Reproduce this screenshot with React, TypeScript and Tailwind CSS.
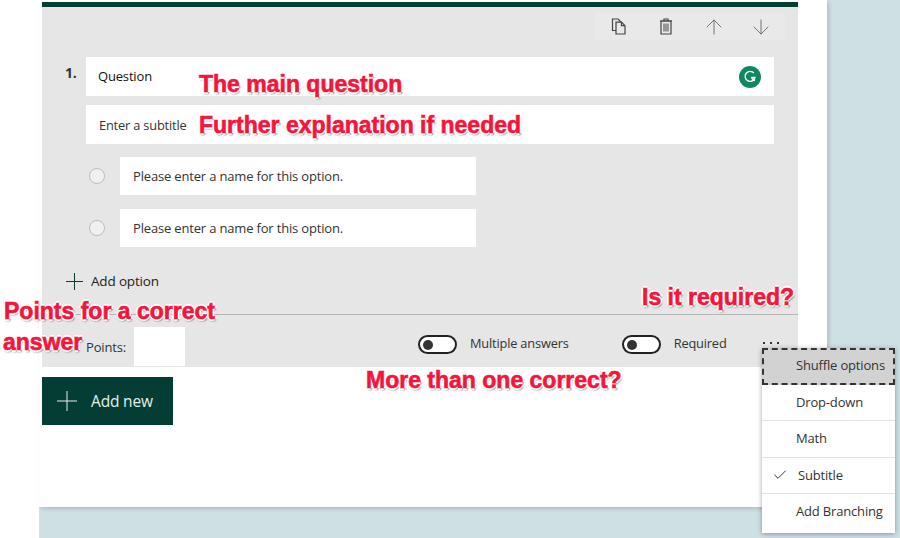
import React from 'react';
import { ArrowDown, ArrowUp, Check } from 'lucide-react';

function CopyIcon() {
  return (
    <svg width="16" height="17" viewBox="0 0 16 17" fill="none" stroke="#444" strokeWidth="1.2">
      <path d="M5 12.5H1.5V1H7L10 4" />
      <path d="M5 4.2h5.5l3.5 3.5v8.3H5z" fill="#e8e8e8" />
      <path d="M10.5 4.2v3.5H14" />
    </svg>
  );
}

function TrashIcon() {
  return (
    <svg width="14" height="17" viewBox="0 0 14 17" fill="none" stroke="#444" strokeWidth="1.2">
      <path d="M1 3h12M5 3V1h4v2" />
      <path d="M2 3v13h10V3z" />
      <path d="M5 5.5v8M7 5.5v8M9 5.5v8" strokeWidth="1" />
    </svg>
  );
}

function GrammarlyIcon() {
  return (
    <div className="flex h-[22px] w-[22px] items-center justify-center rounded-full bg-[#11875d]">
      <svg width="14" height="14" viewBox="0 0 14 14" fill="none" stroke="white" strokeWidth="1.3">
        <path d="M11 3.2A5 5 0 1 0 12 7.5H8.2" />
        <path d="M8.6 7.8l3 3.2" />
      </svg>
    </div>
  );
}

function PlusIcon({ size, color }: { size: number; color: string }) {
  return (
    <svg width={size} height={size} viewBox="0 0 20 20" stroke={color} strokeWidth={size > 18 ? 1 : 1.2}>
      <path d="M10 0v20M0 10h20" />
    </svg>
  );
}

function Toggle() {
  return (
    <div className="flex h-[19px] w-[39px] items-center rounded-full border-2 border-[#222] bg-white pl-[3px]">
      <div className="h-[10px] w-[10px] rounded-full bg-[#333]" />
    </div>
  );
}

function OptionRow() {
  return (
    <div className="flex items-center">
      <div className="ml-[47px] h-4 w-4 rounded-full border border-[#bdbdbd] bg-[#f0f0f0]" />
      <div className="ml-[15px] flex h-[38px] w-[356px] items-center bg-white pl-[13px] pt-[2px] text-[13px] text-[#333]">
        Please enter a name for this option.
      </div>
    </div>
  );
}

function Note({ className, children }: { className: string; children: React.ReactNode }) {
  return (
    <div
      className={`absolute whitespace-nowrap font-['Liberation_Sans',sans-serif] text-[23px] font-bold leading-none tracking-normal text-[#f5143c] [-webkit-text-stroke:0.6px_#f5143c] [text-shadow:2px_0_0_#fff,-2px_0_0_#fff,0_2px_0_#fff,0_-2px_0_#fff,1px_2px_2px_#666] ${className}`}
    >
      {children}
    </div>
  );
}

const menuItems = [
  { label: 'Shuffle options', focused: true },
  { label: 'Drop-down' },
  { label: 'Math' },
  { label: 'Subtitle', checked: true },
  { label: 'Add Branching', last: true },
];

export default function App() {
  return (
    <div className="relative flex h-[538px] w-[900px] overflow-hidden bg-white font-['Open_Sans',sans-serif] tracking-[-0.17px]">
      <div className="w-[39px] shrink-0" />
      <div className="flex-1 bg-[#cfe0e5]">
        <div className="h-[507px] w-[788px] bg-white pl-[3px] pt-[2px] shadow-[2px_2px_4px_rgba(0,0,0,0.15)]">
          <div className="w-[756px] border-t-[5px] border-[#033d33] bg-[#e6e6e6]">
            <div className="flex h-[50px] justify-end pr-[13px] pt-[6px]">
              <div className="flex h-[27px] w-[190px] items-center bg-[#e9e9e9]">
                <div className="flex w-[48px] justify-center pl-[1px]">
                  <CopyIcon />
                </div>
                <div className="flex w-[48px] justify-center">
                  <TrashIcon />
                </div>
                <div className="flex w-[48px] justify-center">
                  <ArrowUp size={24} strokeWidth={0.9} color="#666" />
                </div>
                <div className="flex w-[48px] justify-center">
                  <ArrowDown size={24} strokeWidth={0.9} color="#666" />
                </div>
              </div>
            </div>

            <div className="flex pl-[23px]">
              <div className="w-[21px] pt-[7px] text-[14px] font-bold leading-[18px] text-[#333]">1.</div>
              <div className="flex h-[39px] w-[688px] items-center justify-between bg-white pl-[12px] pr-[13px] text-[13px] text-[#111]">
                Question
                <GrammarlyIcon />
              </div>
            </div>
            <div className="ml-[44px] mt-[9px] flex h-[39px] w-[688px] items-center bg-white pl-[13px] pt-[2px] text-[12.8px] text-[#333]">
              Enter a subtitle
            </div>

            <div className="mt-[13px] flex flex-col gap-[14px]">
              <OptionRow />
              <OptionRow />
            </div>

            <div className="mt-[20px] flex h-[28px] items-center pl-[24px] text-[13.5px] text-[#222]">
              <PlusIcon size={17} color="#0b3b33" />
              <span className="ml-[8px]">Add option</span>
            </div>

            <div className="mt-[19px] flex h-[53px] items-start border-t border-[#b5b5b5]">
              <div className="ml-[44px] mt-[23px] text-[13px] leading-[18px] text-[#333]">Points:</div>
              <div className="ml-[8px] mt-[12px] h-[39px] w-[51px] bg-white" />
              <div className="ml-[233px] mt-[20px]">
                <Toggle />
              </div>
              <div className="ml-[13px] mt-[19px] text-[12.8px] leading-[18px] text-[#333]">Multiple answers</div>
              <div className="ml-[53px] mt-[20px]">
                <Toggle />
              </div>
              <div className="ml-[13px] mt-[19px] text-[12.8px] leading-[18px] text-[#333]">Required</div>
            </div>
          </div>

          <div className="mt-[10px] flex h-[48px] w-[131px] items-center bg-[#033d33] pl-[15px] text-[#e6efec]">
            <PlusIcon size={20} color="#e6efec" />
            <span className="ml-[14px] pt-[1px] text-[15.5px]">Add new</span>
          </div>
        </div>
      </div>

      <Note className="left-[199px] top-[73px]">The main question</Note>
      <Note className="left-[199px] top-[114px]">Further explanation if needed</Note>
      <Note className="left-[4px] top-[300px]">Points for a correct</Note>
      <Note className="left-[3px] top-[331px]">answer</Note>
      <Note className="left-[366px] top-[369px]">More than one correct?</Note>
      <Note className="left-[642px] top-[286px]">Is it required?</Note>

      <div className="absolute left-[763px] top-[342px] flex gap-[5px]">
        <div className="h-[2px] w-[2px] bg-[#333]" />
        <div className="h-[2px] w-[2px] bg-[#333]" />
        <div className="h-[2px] w-[2px] bg-[#333]" />
      </div>

      <div className="absolute left-[762px] top-[348px] w-[133px] divide-y divide-[#e2e2e2] bg-white text-[13px] text-[#333] shadow-[0_1px_5px_rgba(0,0,0,0.35)]">
        {menuItems.map((item) => (
          <div
            key={item.label}
            className={`flex items-center ${item.last ? 'h-[39px] pb-[3px]' : 'h-[36.5px]'} ${
              item.focused
                ? 'border-2 border-dashed border-[#333] bg-[#d2d2d2] pb-[2px] pl-[32px]'
                : item.checked
                  ? 'pl-[10px]'
                  : 'pl-[34px]'
            }`}
          >
            {item.checked && <Check size={16} strokeWidth={1.4} color="#222" className="mr-[10px]" />}
            {item.label}
          </div>
        ))}
      </div>
    </div>
  );
}
